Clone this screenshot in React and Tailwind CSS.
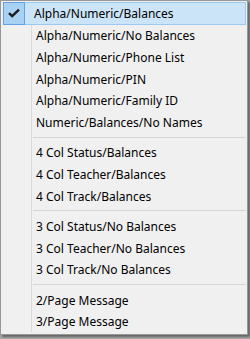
import React from "react";

const groups = [
  [
    "Alpha/Numeric/Balances",
    "Alpha/Numeric/No Balances",
    "Alpha/Numeric/Phone List",
    "Alpha/Numeric/PIN",
    "Alpha/Numeric/Family ID",
    "Numeric/Balances/No Names",
  ],
  ["4 Col Status/Balances", "4 Col Teacher/Balances", "4 Col Track/Balances"],
  ["3 Col Status/No Balances", "3 Col Teacher/No Balances", "3 Col Track/No Balances"],
  ["2/Page Message", "3/Page Message"],
];

function Row({ label, checked }) {
  if (checked) {
    return (
      <div className="h-[23px] -mt-px ml-[2px] mr-[1px] flex items-stretch border border-[#99c9ef] bg-[#cce4f7]">
        <div className="w-[22px] -ml-px -my-px flex items-center justify-center border border-[#62a2e4] bg-[#a9d1f3]">
          <svg width="12" height="10" viewBox="0 0 12 10">
            <path d="M1 5.2 L4.2 8.2 L11 1.6" fill="none" stroke="#1b1b1b" strokeWidth="2.4" />
          </svg>
        </div>
        <div className="pl-[9px] pt-px flex items-center">{label}</div>
      </div>
    );
  }
  return (
    <div className="h-[22px] flex items-stretch">
      <div className="w-[31px] shrink-0 border-r border-[#dadada]" />
      <div className="pl-[4px] pt-[2px] flex items-center">{label}</div>
    </div>
  );
}

function Sep() {
  return (
    <div className="h-[9px] flex items-stretch">
      <div className="w-[31px] shrink-0 border-r border-[#dadada]" />
      <div className="flex-1 flex items-center">
        <div className="h-px w-full ml-[1px] mr-[1px] bg-[#d5d5d5]" />
      </div>
    </div>
  );
}

export default function App() {
  return (
    <div className="w-[250px] h-[339px] bg-[#a8a8a8] overflow-hidden">
      <div
        className="w-[248px] h-[335px] border border-[#979797] bg-[#f0f0f0] py-[2px] flex flex-col text-[12px] text-black shadow-[2px_2px_2px_rgba(0,0,0,0.4)]"
        style={{ fontFamily: '"Noto Sans", "Open Sans", sans-serif' }}
      >
        {groups.map((g, gi) => (
          <React.Fragment key={gi}>
            {gi > 0 && <Sep />}
            {g.map((label, i) => (
              <Row key={label} label={label} checked={gi === 0 && i === 0} />
            ))}
          </React.Fragment>
        ))}
      </div>
    </div>
  );
}
